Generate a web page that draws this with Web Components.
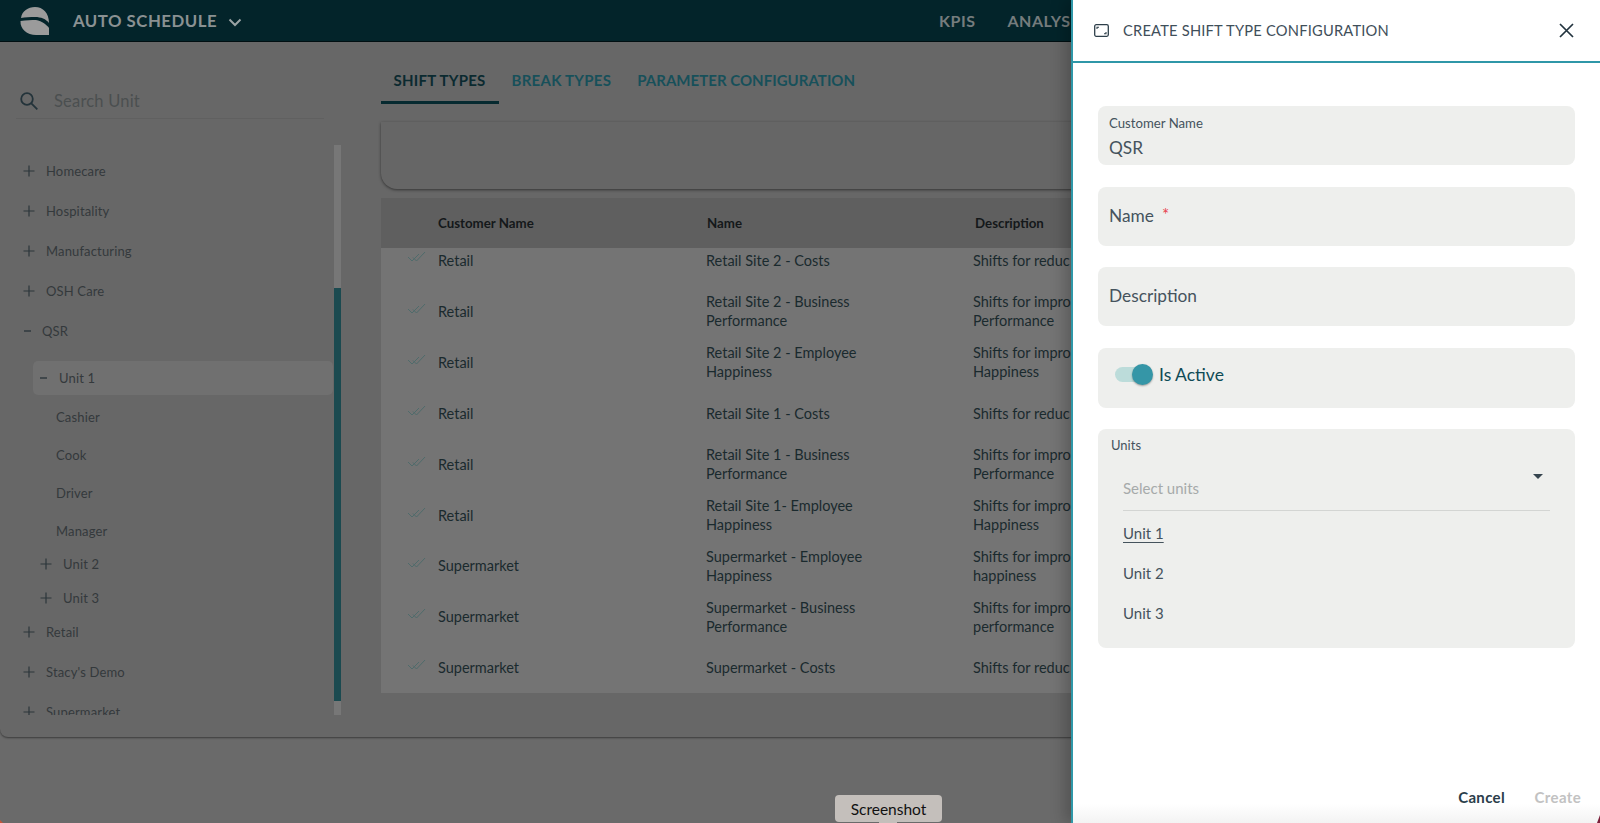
<!DOCTYPE html>
<html lang="en">
<head>
<meta charset="utf-8">
<title>Auto Schedule</title>
<style>
    html, body { margin: 0; height: 823px; overflow: hidden; background: #6a6a6a; }
    body { font-family: "Lato", "Noto Sans", sans-serif; position: relative; }
</style>
</head>
<body>
<app-shell></app-shell>
<config-panel></config-panel>
<capture-tip>Screenshot</capture-tip>
<window-corners></window-corners>

<script>
/**
 * Auto Schedule — shift type configuration screen.
 * Page behind the panel is drawn in its dimmed colours, no separate scrim.
 */

class AppShell extends HTMLElement {
    constructor() {
        super();
        this.attachShadow({ mode: 'open' });
    }

    connectedCallback() {
        this.shadowRoot.innerHTML = `
            <style>
                :host { display: block; }
                .card {
                    height: 737px;
                    background: #676767;
                    border-bottom-left-radius: 8px;
                    box-shadow: 0 1px 2px rgba(0, 0, 0, 0.45);
                    display: flex;
                    flex-direction: column;
                    overflow: hidden;
                }
                .body { display: flex; flex: 1; min-height: 0; }
            </style>
            <div class="card">
                <top-bar></top-bar>
                <div class="body">
                    <unit-sidebar></unit-sidebar>
                    <shift-main></shift-main>
                </div>
            </div>
        `;
    }
}

class TopBar extends HTMLElement {
    constructor() {
        super();
        this.attachShadow({ mode: 'open' });
    }

    connectedCallback() {
        this.shadowRoot.innerHTML = `
            <style>
                :host {
                    display: flex;
                    align-items: center;
                    height: 42px;
                    box-sizing: border-box;
                    background: #03242a;
                    border-bottom: 1px solid #010f12;
                    color: #8a9192;
                    font: 700 16.800px "Lato", sans-serif;
                    letter-spacing: 0.5px;
                    white-space: nowrap;
                }
                .logo { margin-left: 20px; width: 30px; height: 28px; }
                .app { margin-left: 23px; }
                .chev { margin-left: 11px; width: 14px; height: 9px; margin-top: 3px; }
                nav { margin-left: 697px; display: flex; gap: 32px; font-size: 16px; color: #757c7d; }
            </style>
            <svg class="logo" viewBox="0 0 30 28" fill="#9b9b9b">
                <path d="M1 11C2 4 8 0 15 0c8 0 14 6 14 16-3-4-8-6-14-6-5 0-10 0-14 1z"/>
                <path d="M.5 14c6-1 11-1 15.500-1 6 1 11 5 13 8v7H16C7 28 0 22 .5 14z"/>
            </svg>
            <span class="app">AUTO SCHEDULE</span>
            <svg class="chev" viewBox="0 0 14 9" fill="none" stroke="#9aa3a4" stroke-width="2"><path d="M1.500 1.500 7 7l5.500-5.500"/></svg>
            <nav><span>KPIS</span><span>ANALYS</span></nav>
        `;
    }
}

class UnitSidebar extends HTMLElement {
    constructor() {
        super();
        this.attachShadow({ mode: 'open' });
    }

    connectedCallback() {
        this.shadowRoot.innerHTML = `
            <style>
                :host { display: block; width: 381px; flex-shrink: 0; }
                .search {
                    display: flex;
                    align-items: center;
                    box-sizing: border-box;
                    height: 35px;
                    margin: 42px 0 26px 16px;
                    width: 308px;
                    border-bottom: 1px solid #606060;
                    color: #4b4f50;
                    font-size: 16.500px;
                    letter-spacing: 0.2px;
                }
                .search svg { width: 20px; height: 20px; margin: 0 15px 0 3px; }
                .list { display: grid; grid-template-columns: 334px 7px; height: 570px; }
                .tree { overflow: hidden; padding-top: 6px; }
                .bar { background: #777; display: flex; flex-direction: column; }
                .thumb { margin-top: 143px; height: 413px; background: #1b4a50; }
                .kids { margin-top: -3px; margin-bottom: -4px; }
            </style>
            <div class="search">
                <svg viewBox="0 0 20 20" fill="none" stroke="#23333a" stroke-width="1.800">
                    <circle cx="8" cy="8" r="5.800"/><path d="m12.300 12.300 6 6"/>
                </svg>
                <span>Search Unit</span>
            </div>
            <div class="list">
                <div class="tree">
                    <tree-row kind="top">Homecare</tree-row>
                    <tree-row kind="top">Hospitality</tree-row>
                    <tree-row kind="top">Manufacturing</tree-row>
                    <tree-row kind="top">OSH Care</tree-row>
                    <tree-row kind="open">QSR</tree-row>
                    <tree-row kind="selected">Unit 1</tree-row>
                    <tree-row kind="leaf">Cashier</tree-row>
                    <tree-row kind="leaf">Cook</tree-row>
                    <tree-row kind="leaf">Driver</tree-row>
                    <tree-row kind="leaf">Manager</tree-row>
                    <div class="kids">
                        <tree-row kind="unit">Unit 2</tree-row>
                        <tree-row kind="unit">Unit 3</tree-row>
                    </div>
                    <tree-row kind="top">Retail</tree-row>
                    <tree-row kind="top">Stacy's Demo</tree-row>
                    <tree-row kind="top">Supermarket</tree-row>
                </div>
                <div class="bar"><div class="thumb"></div></div>
            </div>
        `;
    }
}

class TreeRow extends HTMLElement {
    constructor() {
        super();
        this.attachShadow({ mode: 'open' });
    }

    connectedCallback() {
        const kind = this.getAttribute('kind') || 'top';
        const plus = '<svg viewBox="0 0 12 12" width="12" height="12" stroke="#2c363b" stroke-width="1.200"><path d="M6 .5v11M.5 6h11"/></svg>';
        const minus = '<svg viewBox="0 0 7 12" width="7" height="12" stroke="#2c363b" stroke-width="1.400"><path d="M0 6h7"/></svg>';
        const icons = { top: plus, unit: plus, open: minus, selected: minus, leaf: '' };

        this.shadowRoot.innerHTML = `
            <style>
                :host {
                    display: flex;
                    align-items: center;
                    box-sizing: border-box;
                    height: 40.100px;
                    padding-left: 23px;
                    color: #34393c;
                    font-size: 13px;
                    letter-spacing: 0.15px;
                    white-space: nowrap;
                }
                svg { flex-shrink: 0; }
                span { margin-left: 11px; }
                :host([kind="open"]) { padding-left: 24px; }
                :host([kind="selected"]) {
                    height: 34px;
                    margin: 10px 1px 3px 33px;
                    padding-left: 7px;
                    background: #707070;
                    border-radius: 5px;
                }
                :host([kind="selected"]) span { margin-left: 12px; }
                :host([kind="leaf"]) { height: 38px; padding-left: 56px; }
                :host([kind="leaf"]) span { margin-left: 0; }
                :host([kind="unit"]) { height: 34px; padding-left: 40px; }
            </style>
            ${icons[kind]}<span><slot></slot></span>
        `;
    }
}

class ShiftMain extends HTMLElement {
    constructor() {
        super();
        this.attachShadow({ mode: 'open' });
    }

    connectedCallback() {
        this.shadowRoot.innerHTML = `
            <style>
                :host { display: block; flex: 1; min-width: 0; }
                .tabs { display: flex; height: 62px; box-sizing: border-box; padding-top: 18px; }
                .tab {
                    box-sizing: border-box;
                    height: 44px;
                    padding: 11px 13px 0;
                    color: #17505a;
                    font-size: 15px;
                    font-weight: 700;
                    letter-spacing: 0.25px;
                    white-space: nowrap;
                }
                .tab.on { color: #0b2a30; border-bottom: 3px solid #062a30; padding-left: 12.500px; }
                .tab.long { letter-spacing: 0.03px; }
                .filters {
                    height: 67px;
                    margin-top: 18px;
                    background: #666;
                    border-bottom-left-radius: 16px;
                    box-shadow: 0 1px 3px rgba(0, 0, 0, 0.5);
                }
            </style>
            <div class="tabs">
                <div class="tab on">SHIFT TYPES</div>
                <div class="tab">BREAK TYPES</div>
                <div class="tab long">PARAMETER CONFIGURATION</div>
            </div>
            <div class="filters"></div>
            <shift-table></shift-table>
        `;
    }
}

class ShiftTable extends HTMLElement {
    constructor() {
        super();
        this.attachShadow({ mode: 'open' });
    }

    connectedCallback() {
        const rows = [
            ['Retail', 'Retail Site 2 - Costs', 'Shifts for reduc'],
            ['Retail', 'Retail Site 2 - Business<br>Performance', 'Shifts for impro<br>Performance'],
            ['Retail', 'Retail Site 2 - Employee<br>Happiness', 'Shifts for impro<br>Happiness'],
            ['Retail', 'Retail Site 1 - Costs', 'Shifts for reduc'],
            ['Retail', 'Retail Site 1 - Business<br>Performance', 'Shifts for impro<br>Performance'],
            ['Retail', 'Retail Site 1- Employee<br>Happiness', 'Shifts for impro<br>Happiness'],
            ['Supermarket', 'Supermarket - Employee<br>Happiness', 'Shifts for impro<br>happiness'],
            ['Supermarket', 'Supermarket - Business<br>Performance', 'Shifts for impro<br>performance'],
            ['Supermarket', 'Supermarket - Costs', 'Shifts for reduc']
        ];
        const check = `<svg viewBox="0 0 19 12" width="19" height="12" fill="none" stroke="#4f6b6b" stroke-width="1">
            <path d="m1 6 4 4 7-7"/><path d="m6 6.500 3.500 3.500 8.500-9"/></svg>`;

        this.shadowRoot.innerHTML = `
            <style>
                :host {
                    display: block;
                    margin-top: 9px;
                    color: #1a2a2e;
                    font-size: 14.500px;
                    line-height: 19px;
                }
                .row {
                    display: grid;
                    grid-template-columns: 57px 268px 267px 1fr;
                    align-items: center;
                    height: 50.900px;
                    background: #747474;
                    white-space: nowrap;
                }
                .first { height: 38px; align-items: start; }
                .first span { margin-top: 3px; }
                .head { height: 50px; background: #5f5f5f; color: #14181a; font-weight: 700; font-size: 13.300px; }
                .head span:nth-child(n+3) { padding-left: 1px; }
                .head span:nth-child(4) { padding-left: 2px; }
                .tick { padding: 0 0 5px 26px; }
                svg { display: block; }
            </style>
            <div class="head row">
                <span></span><span>Customer Name</span><span>Name</span><span>Description</span>
            </div>
            ${rows.map(([customer, name, desc], i) => `
                <div class="row ${i === 0 ? 'first' : ''}">
                    <span class="tick">${check}</span><span>${customer}</span><span>${name}</span><span>${desc}</span>
                </div>`).join('')}
        `;
    }
}

class ConfigPanel extends HTMLElement {
    constructor() {
        super();
        this.attachShadow({ mode: 'open' });
    }

    connectedCallback() {
        this.shadowRoot.innerHTML = `
            <style>
                :host {
                    position: absolute;
                    top: 0;
                    right: 0;
                    bottom: 0;
                    width: 529px;
                    box-sizing: border-box;
                    display: flex;
                    flex-direction: column;
                    background: #fff;
                    border-left: 2px solid #2f97a8;
                    box-shadow: -6px 0 14px rgba(0, 0, 0, 0.22);
                    color: #3f4f5a;
                }
                header {
                    display: flex;
                    align-items: center;
                    height: 63px;
                    box-sizing: border-box;
                    flex-shrink: 0;
                    border-bottom: 2px solid #2f97a8;
                    padding: 0 26px 1px 21px;
                }
                h1 { margin: 0 0 0 14px; flex: 1; font-size: 14.700px; font-weight: 400; letter-spacing: 0.2px; white-space: nowrap; }
                .form { flex: 1; display: flex; flex-direction: column; gap: 21.500px; padding: 43px 25.500px 0 25px; }
                footer {
                    height: 55px;
                    flex-shrink: 0;
                    display: flex;
                    gap: 29.500px;
                    padding: 20px 19px 0 0;
                    box-sizing: border-box;
                    justify-content: flex-end;
                    font-size: 15px;
                    font-weight: 700;
                    letter-spacing: 0.35px;
                    background: linear-gradient(#fff 65%, #f3f3f3);
                }
                .cancel { color: #2a3d4a; }
                .create { color: #c2c2c2; }
            </style>
            <header>
                <svg width="15" height="13" viewBox="0 0 15 13" fill="none" stroke="#2e3f4a">
                    <rect x=".7" y=".7" width="13.600" height="11.600" rx="1.500" stroke-width="1.300"/>
                    <path d="M3 5V3.200h2M12 8v1.800h-2" stroke-width="1.100"/>
                </svg>
                <h1>CREATE SHIFT TYPE CONFIGURATION</h1>
                <svg width="15" height="15" viewBox="0 0 15 15" stroke="#22333e" stroke-width="1.700"><path d="m1 1 13 13M14 1 1 14"/></svg>
            </header>
            <div class="form">
                <form-field label="Customer Name" value="QSR"></form-field>
                <form-field label="Name" required></form-field>
                <form-field label="Description"></form-field>
                <toggle-field>Is Active</toggle-field>
                <units-select></units-select>
            </div>
            <footer><span class="cancel">Cancel</span><span class="create">Create</span></footer>
        `;
    }
}

class FormField extends HTMLElement {
    constructor() {
        super();
        this.attachShadow({ mode: 'open' });
    }

    connectedCallback() {
        const label = this.getAttribute('label') || '';
        const value = this.getAttribute('value');
        const star = this.hasAttribute('required') ? '<i>*</i>' : '';

        this.shadowRoot.innerHTML = `
            <style>
                :host {
                    display: flex;
                    flex-direction: column;
                    justify-content: center;
                    box-sizing: border-box;
                    height: 59px;
                    padding: 0 11px;
                    background: #eeefed;
                    border-radius: 8px;
                    color: #45535d;
                    font-size: 17.300px;
                }
                .small { font-size: 13.200px; line-height: 18px; margin-top: 3px; }
                .value { line-height: 27px; margin-top: 2px; }
                .plain { margin-top: -2px; }
                i { color: #e8434f; font-style: normal; margin-left: 8px; font-size: 17px; vertical-align: 1px; }
            </style>
            ${value
                ? `<div class="small">${label}</div><div class="value">${value}</div>`
                : `<div class="plain">${label}${star}</div>`}
        `;
    }
}

class ToggleField extends HTMLElement {
    constructor() {
        super();
        this.attachShadow({ mode: 'open' });
    }

    connectedCallback() {
        this.shadowRoot.innerHTML = `
            <style>
                :host {
                    display: flex;
                    align-items: center;
                    height: 60px;
                    box-sizing: border-box;
                    padding: 0 0 6px 17px;
                    background: #eeefed;
                    border-radius: 8px;
                    color: #0f4a55;
                    font-size: 17.500px;
                }
                .track { position: relative; width: 30px; height: 15px; border-radius: 8px; background: #bcdcda; margin-right: 14px; }
                .thumb {
                    position: absolute;
                    top: -3px;
                    right: -8px;
                    width: 21px;
                    height: 21px;
                    border-radius: 50%;
                    background: #3596a7;
                    box-shadow: 0 1px 2px rgba(0, 0, 0, 0.35);
                }
            </style>
            <div class="track"><div class="thumb"></div></div>
            <slot></slot>
        `;
    }
}

class UnitsSelect extends HTMLElement {
    constructor() {
        super();
        this.attachShadow({ mode: 'open' });
    }

    connectedCallback() {
        this.shadowRoot.innerHTML = `
            <style>
                :host {
                    display: block;
                    height: 219px;
                    box-sizing: border-box;
                    padding: 8px 25px 0 13px;
                    background: #eeefed;
                    border-radius: 8px;
                    color: #45535d;
                }
                .label { font-size: 13px; line-height: 17px; }
                .select {
                    display: flex;
                    justify-content: space-between;
                    box-sizing: border-box;
                    height: 57px;
                    margin-left: 12px;
                    border-bottom: 1px solid #d3d5d3;
                    color: #a6aaaa;
                    font-size: 15px;
                }
                .select span { margin-top: 25px; line-height: 18px; }
                .select svg { margin: 20px 7px 0 0; }
                ul { list-style: none; margin: 0; padding: 2px 0 0 12px; font-size: 15px; }
                li { height: 40px; line-height: 40px; }
                li:first-child { text-decoration: underline; text-underline-offset: 3px; }
            </style>
            <div class="label">Units</div>
            <div class="select">
                <span>Select units</span>
                <svg width="10" height="5" viewBox="0 0 10 5" fill="#36454f"><path d="M0 0h10L5 5z"/></svg>
            </div>
            <ul><li>Unit 1</li><li>Unit 2</li><li>Unit 3</li></ul>
        `;
    }
}

class CaptureTip extends HTMLElement {
    constructor() {
        super();
        this.attachShadow({ mode: 'open' });
    }

    connectedCallback() {
        this.shadowRoot.innerHTML = `
            <style>
                :host {
                    position: absolute;
                    left: 835px;
                    top: 795px;
                    width: 107px;
                    height: 27px;
                    display: flex;
                    align-items: center;
                    justify-content: center;
                    background: #c4bfbb;
                    border-radius: 4px;
                    color: #111;
                    font-size: 15.500px;
                }
                :host::after {
                    content: "";
                    position: absolute;
                    left: 44px;
                    bottom: -1px;
                    width: 18px;
                    height: 1px;
                    background: #c4bfbb;
                }
            </style>
            <slot></slot>
        `;
    }
}

// Rounded window corners, the wallpaper shows through at the very bottom
class WindowCorners extends HTMLElement {
    constructor() {
        super();
        this.attachShadow({ mode: 'open' });
    }

    connectedCallback() {
        this.shadowRoot.innerHTML = `
            <style>
                svg { position: absolute; bottom: 0; }
                .left { left: 0; }
                .right { right: 0; }
            </style>
            <svg class="left" width="3" height="3"><path d="M0 0l3 3H0z" fill="#c4553a"/></svg>
            <svg class="right" width="3" height="8"><path d="M3 0v8H0z" fill="#7c1f3a"/></svg>
        `;
    }
}

customElements.define('app-shell', AppShell);
customElements.define('top-bar', TopBar);
customElements.define('unit-sidebar', UnitSidebar);
customElements.define('tree-row', TreeRow);
customElements.define('shift-main', ShiftMain);
customElements.define('shift-table', ShiftTable);
customElements.define('config-panel', ConfigPanel);
customElements.define('form-field', FormField);
customElements.define('toggle-field', ToggleField);
customElements.define('units-select', UnitsSelect);
customElements.define('capture-tip', CaptureTip);
customElements.define('window-corners', WindowCorners);
</script>
</body>
</html>
